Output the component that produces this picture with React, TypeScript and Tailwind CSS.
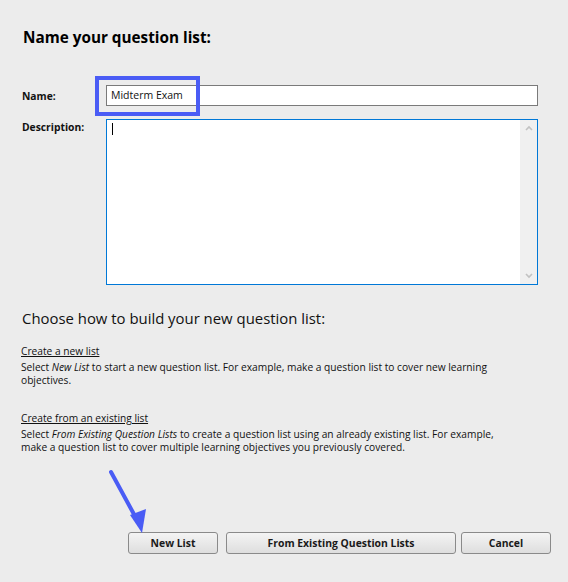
import React from "react";

function Btn({ children, w }: { children: React.ReactNode; w: string }) {
  return (
    <button
      className={`${w} h-[22px] rounded-[3px] border border-[#8a8a8a] bg-gradient-to-b from-[#f4f4f4] to-[#dedede] text-[10.4px] font-bold text-[#1a1a1a] leading-none`}
    >
      {children}
    </button>
  );
}

export default function App() {
  return (
    <div
      className="relative w-[568px] h-[582px] bg-[#ececec] text-[#111] overflow-hidden"
      style={{ fontFamily: '"Open Sans", "Noto Sans", sans-serif' }}
    >
      <div className="pl-[23px] pt-[27px]">
        <h1 className="text-[15.3px] font-bold leading-[20px] text-black">Name your question list:</h1>
      </div>

      <div className="mt-[38px] flex items-center pl-[22px]">
        <div className="w-[84px] text-[10.3px] font-bold leading-[14px]">Name:</div>
        <div className="w-[432px] h-[21px] bg-white border border-[#7a7a7a] flex items-center pl-[4px] text-[10.5px]">
          Midterm Exam
        </div>
      </div>

      <div className="mt-[13px] flex items-start pl-[22px]">
        <div className="w-[84px] text-[10.3px] font-bold leading-[14px] pt-[1px]">Description:</div>
        <div className="w-[432px] h-[166px] bg-white border border-[#0078d7] flex">
          <div className="flex-1 relative">
            <div className="absolute left-[5px] top-[3px] w-[1px] h-[12px] bg-black" />
          </div>
          <div className="w-[17px] h-full bg-[#f0f0f0] flex flex-col items-center justify-between py-[5px]">
            <svg width="8" height="6" viewBox="0 0 8 6">
              <path d="M1 5 L4 2 L7 5" stroke="#c2c2c2" strokeWidth="1.6" fill="none" />
            </svg>
            <svg width="8" height="6" viewBox="0 0 8 6">
              <path d="M1 1 L4 4 L7 1" stroke="#c2c2c2" strokeWidth="1.6" fill="none" />
            </svg>
          </div>
        </div>
      </div>

      <div className="pl-[22px] mt-[23px] text-[14.9px] leading-[20px]">Choose how to build your new question list:</div>

      <div className="pl-[21px] mt-[17px] text-[10.2px] leading-[13px]">
        <div className="underline">Create a new list</div>
        <div className="mt-[3px]">
          Select <i>New List</i> to start a new question list. For example, make a question list to cover new learning
          <br />
          objectives.
        </div>
        <div className="underline mt-[25px]">Create from an existing list</div>
        <div className="mt-[3px]">
          Select <i>From Existing Question Lists</i> to create a question list using an already existing list. For example,
          <br />
          make a question list to cover multiple learning objectives you previously covered.
        </div>
      </div>

      <div className="absolute left-[128px] top-[532px] flex">
        <Btn w="w-[90px]">New List</Btn>
        <div className="w-[8px]" />
        <Btn w="w-[230px]">From Existing Question Lists</Btn>
        <div className="w-[5px]" />
        <Btn w="w-[90px]">Cancel</Btn>
      </div>

      {/* highlight box */}
      <div className="absolute left-[95px] top-[76px] w-[105px] h-[40px] border-[4px] border-[#4a5cf5]" />

      {/* arrow */}
      <svg className="absolute left-0 top-0" width="568" height="582" style={{ pointerEvents: "none" }}>
        <line x1="111" y1="472" x2="136" y2="518" stroke="#4a5cf5" strokeWidth="4" strokeLinecap="round" />
        <polygon points="142,533 130,515 146,509" fill="#4a5cf5" />
      </svg>
    </div>
  );
}
